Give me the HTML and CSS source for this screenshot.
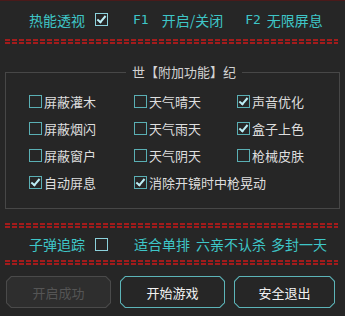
FILE: index.html
```html
<!DOCTYPE html>
<html lang="zh">
<head>
    <meta charset="UTF-8">
    <title>热能透视</title>
    <link rel="stylesheet" href="styles.css">
</head>
<body>
    <div class="top-row">
        <span class="cyan t1">热能透视</span>
        <span class="cb big on"></span>
        <span class="cyan key">F1</span>
        <span class="cyan t2">开启/关闭</span>
        <span class="cyan key k2">F2</span>
        <span class="cyan t3">无限屏息</span>
    </div>
    <div class="sep"></div>

    <fieldset class="group">
        <legend>世【附加功能】纪</legend>
        <div class="opts">
            <label class="opt"><span class="cb"></span>屏蔽灌木</label>
            <label class="opt"><span class="cb"></span>天气晴天</label>
            <label class="opt"><span class="cb on"></span>声音优化</label>
            <label class="opt"><span class="cb"></span>屏蔽烟闪</label>
            <label class="opt"><span class="cb"></span>天气雨天</label>
            <label class="opt"><span class="cb on"></span>盒子上色</label>
            <label class="opt"><span class="cb"></span>屏蔽窗户</label>
            <label class="opt"><span class="cb"></span>天气阴天</label>
            <label class="opt"><span class="cb"></span>枪械皮肤</label>
            <label class="opt"><span class="cb on"></span>自动屏息</label>
            <label class="opt wide"><span class="cb on"></span>消除开镜时中枪晃动</label>
        </div>
    </fieldset>

    <div class="sep sep2"></div>
    <div class="bullet-row">
        <span class="cyan t1">子弹追踪</span>
        <span class="cb big"></span>
        <span class="cyan b1">适合单排</span>
        <span class="cyan b2">六亲不认杀</span>
        <span class="cyan b3">多封一天</span>
    </div>
    <div class="sep"></div>

    <div class="buttons">
        <div class="btn off"><span>开启成功</span></div>
        <div class="btn"><span>开始游戏</span></div>
        <div class="btn last"><span>安全退出</span></div>
    </div>
</body>
</html>
```

FILE: styles.css
```css
body {
    margin: 0;
    background-color: #262626;
    font-family: "Noto Sans CJK SC", "Noto Sans", sans-serif;
    overflow: hidden;
}

.cyan {
    color: #3ec6c8;
    font-size: 14px;
    line-height: 18px;
}

/* Top row */
.top-row {
    height: 39px;
    box-sizing: border-box;
    border-top: 1px solid #4a1a1a;
    display: flex;
    align-items: center;
    padding-left: 29px;
    padding-bottom: 1px;
}

.top-row .cb { margin-left: 10px; }
.top-row .key { margin-left: 25px; font-size: 13px; font-family: "DejaVu Sans Mono", monospace; }
.top-row .t2 { margin-left: 13px; }
.top-row .k2 { margin-left: 22px; }
.top-row .t3 { margin-left: 6px; }

/* Red double dashed line */
.sep {
    height: 5px;
    margin: 0 7px 0 5px;
    background-image:
        repeating-linear-gradient(90deg, #a21c1c 0 5px, transparent 5px 7px),
        repeating-linear-gradient(90deg, #a21c1c 0 5px, transparent 5px 7px);
    background-size: 100% 2px, 100% 2px;
    background-position: 0 0, 0 100%;
    background-repeat: no-repeat;
}

.sep2 { margin-top: 14px; }

/* Group box */
.group {
    margin: 19px 5px 0 5px;
    padding: 7px 0 12px 23px;
    border: 1px solid #474747;
    min-width: 0;
}

.group legend {
    margin: 0 auto;
    padding: 0 6px;
    color: #d2d2d2;
    font-size: 13px;
    line-height: 18px;
}

.opts {
    display: grid;
    grid-template-columns: 105px 103px 1fr;
    grid-auto-rows: 27px;
}

.opt {
    display: flex;
    align-items: center;
    color: #dedede;
    font-size: 13px;
    white-space: nowrap;
}

.opt .cb { margin-right: 2px; }
.opt.wide { grid-column: span 2; }

/* Checkbox */
.cb {
    width: 11px;
    height: 11px;
    border: 1px solid #5aafb4;
    position: relative;
    flex-shrink: 0;
}

.cb.big {
    border-color: #8cd2dc;
}

.cb.on::after {
    content: "";
    position: absolute;
    left: 3px;
    top: 0px;
    width: 3px;
    height: 7px;
    border-right: 2px solid #bdeef6;
    border-bottom: 2px solid #bdeef6;
    transform: rotate(40deg);
}

/* Bullet row */
.bullet-row {
    height: 32px;
    display: flex;
    align-items: center;
    padding-left: 29px;
}

.bullet-row .cb { margin-left: 10px; }
.bullet-row .b1 { margin-left: 26px; }
.bullet-row .b2 { margin-left: 6px; }
.bullet-row .b3 { margin-left: 5px; }

/* Buttons */
.buttons {
    display: flex;
    gap: 9px;
    padding-left: 6px;
    margin-top: 11px;
}

.btn {
    width: 105px;
    height: 32px;
    padding: 1px;
    box-sizing: border-box;
    background-color: #5cb4b8;
    clip-path: polygon(5px 0, calc(100% - 5px) 0, 100% 5px, 100% calc(100% - 5px), calc(100% - 5px) 100%, 5px 100%, 0 calc(100% - 5px), 0 5px);
}

.btn span {
    display: flex;
    height: 100%;
    align-items: center;
    justify-content: center;
    background-color: #262626;
    color: #f2f2f2;
    font-size: 13px;
    clip-path: polygon(4.5px 0, calc(100% - 4.5px) 0, 100% 4.5px, 100% calc(100% - 4.5px), calc(100% - 4.5px) 100%, 4.5px 100%, 0 calc(100% - 4.5px), 0 4.5px);
}

.btn.off { background-color: #4a4a4a; }
.btn.off span { background-color: #2e2e2e; color: #555; }
.btn.last { width: 101px; }
```
